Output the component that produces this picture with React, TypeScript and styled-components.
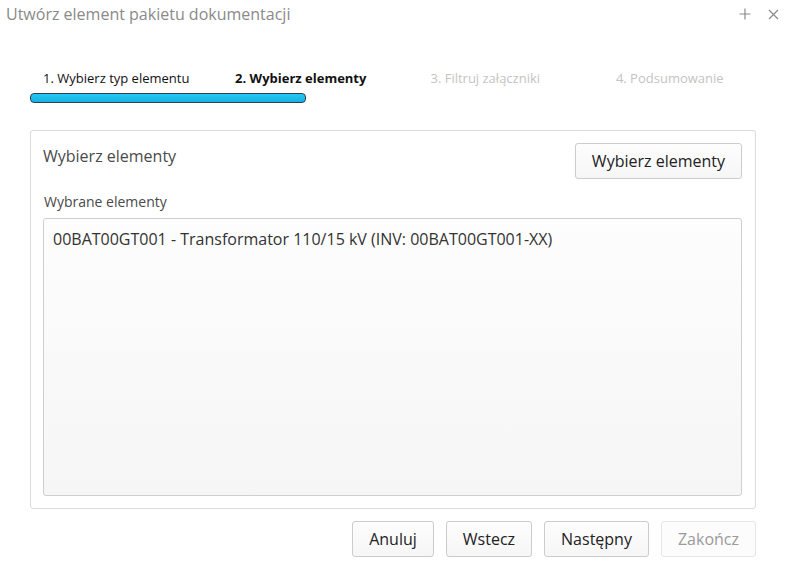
import React from "react";
import styled, { createGlobalStyle } from "styled-components";

const Global = createGlobalStyle`
  html, body { margin: 0; padding: 0; background: #fff; }
  body { font-family: "Open Sans", "Noto Sans", sans-serif; }
  * { box-sizing: border-box; }
`;

const Dialog = styled.div`
  width: 788px;
  height: 586px;
  background: #fff;
  display: flex;
  flex-direction: column;
`;

const Header = styled.div`
  height: 30px;
  display: flex;
  align-items: center;
  justify-content: space-between;
  padding: 0 8px 2px 6px;
`;

const Title = styled.div`
  font-size: 16px;
  color: #8a8a8a;
`;

const HeaderIcons = styled.div`
  display: flex;
  gap: 14px;
  align-items: center;
  color: #8a8a8a;
`;

const IconBtn = styled.span`
  display: inline-flex;
  width: 14px;
  height: 14px;
  align-items: center;
  justify-content: center;
`;

const Steps = styled.div`
  margin: 39px 0 0 24px;
  width: 738px;
`;

const StepLabels = styled.div`
  display: grid;
  grid-template-columns: repeat(4, 1fr);
`;

const Step = styled.div<{ $state: "done" | "active" | "todo" }>`
  text-align: center;
  font-size: 13px;
  line-height: 18px;
  font-weight: ${(p) => (p.$state === "active" ? 700 : 400)};
  color: ${(p) => (p.$state === "todo" ? "#c4c4c4" : "#111")};
`;

const Track = styled.div`
  margin: 6px 0 0 6px;
  height: 10px;
`;

const Bar = styled.div`
  height: 10px;
  border: 1px solid #2b3e52;
  border-radius: 4px;
  background: linear-gradient(#25c8f5, #16b1e2);
`;

const Panel = styled.div`
  margin: 27px 0 0 30px;
  width: 726px;
  height: 379px;
  border: 1px solid #dcdcdc;
  border-radius: 3px;
  padding: 12px 13px 12px 12px;
  display: flex;
  flex-direction: column;
`;

const PanelHead = styled.div`
  display: flex;
  justify-content: space-between;
  align-items: flex-start;
`;

const PanelTitle = styled.div`
  font-size: 16px;
  color: #4a4a4a;
  line-height: 22px;
  margin-top: 2px;
`;

const Button = styled.button<{ $disabled?: boolean }>`
  font-family: "Open Sans", "Noto Sans", sans-serif;
  font-size: 16px;
  height: 36px;
  padding: 0 16px;
  border-radius: 3px;
  border: 1px solid ${(p) => (p.$disabled ? "#e6e6e6" : "#cccccc")};
  background: ${(p) => (p.$disabled ? "#fcfcfc" : "linear-gradient(#fdfdfd, #f6f6f6)")};
  color: ${(p) => (p.$disabled ? "#9a9a9a" : "#222")};
  cursor: pointer;
`;

const FieldLabel = styled.div`
  margin: 13px 0 0 1px;
  font-size: 14px;
  line-height: 20px;
  color: #4a4a4a;
`;

const ListBox = styled.div`
  margin-top: 6px;
  flex: 1;
  border: 1px solid #cfcfcf;
  border-radius: 3px;
  background: linear-gradient(#fdfdfd, #f6f6f6);
  padding: 8px 9px;
  font-size: 16px;
  line-height: 24px;
  color: #333;
`;

const Footer = styled.div`
  margin: 12px 0 0 0;
  width: 756px;
  display: flex;
  justify-content: flex-end;
  gap: 12px;
`;

export default function App() {
  return (
    <>
      <Global />
      <Dialog>
        <Header>
          <Title>Utwórz element pakietu dokumentacji</Title>
          <HeaderIcons>
            <IconBtn>
              <svg width="12" height="12" viewBox="0 0 12 12">
                <path d="M6 0.5V11.5M0.5 6H11.5" stroke="#8a8a8a" strokeWidth="1.2" />
              </svg>
            </IconBtn>
            <IconBtn>
              <svg width="11" height="11" viewBox="0 0 11 11">
                <path d="M1 1L10 10M10 1L1 10" stroke="#8a8a8a" strokeWidth="1.2" />
              </svg>
            </IconBtn>
          </HeaderIcons>
        </Header>
        <Steps>
          <StepLabels>
            <Step $state="done">1. Wybierz typ elementu</Step>
            <Step $state="active">2. Wybierz elementy</Step>
            <Step $state="todo">3. Filtruj załączniki</Step>
            <Step $state="todo">4. Podsumowanie</Step>
          </StepLabels>
          <Track>
            <Bar style={{ width: "276px" }} />
          </Track>
        </Steps>
        <Panel>
          <PanelHead>
            <PanelTitle>Wybierz elementy</PanelTitle>
            <Button>Wybierz elementy</Button>
          </PanelHead>
          <FieldLabel>Wybrane elementy</FieldLabel>
          <ListBox>00BAT00GT001 - Transformator 110/15 kV (INV: 00BAT00GT001-XX)</ListBox>
        </Panel>
        <Footer>
          <Button>Anuluj</Button>
          <Button>Wstecz</Button>
          <Button>Następny</Button>
          <Button $disabled>Zakończ</Button>
        </Footer>
      </Dialog>
    </>
  );
}
